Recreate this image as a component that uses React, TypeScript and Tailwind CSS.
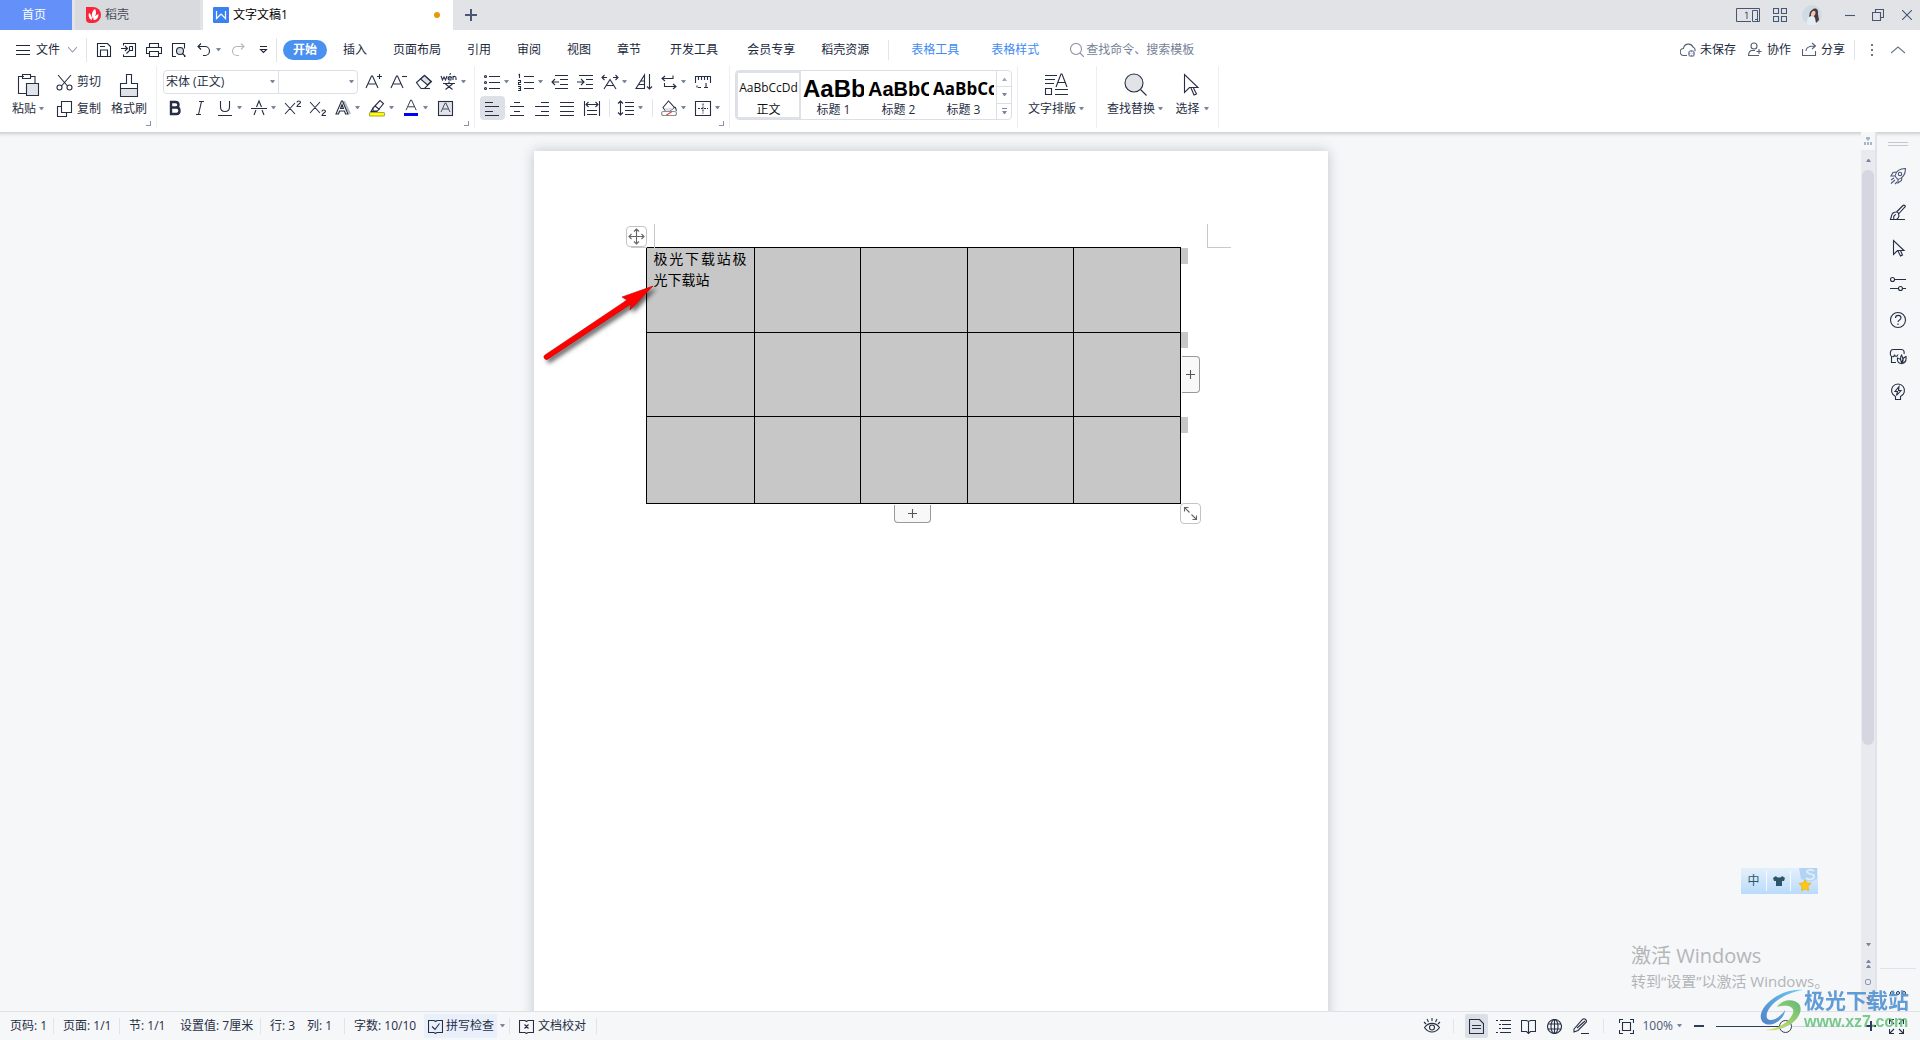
import type { ReactNode } from 'react'
import clsx from 'clsx'

const uiFont = 'font-["Open_Sans","Noto_Sans_CJK_SC",sans-serif]'

/* ---------- small building blocks ---------- */

interface IconProps {
  children: ReactNode
  size?: number
  className?: string
}

function Icon({ children, size = 18, className }: IconProps) {
  return (
    <svg
      width={size}
      height={size}
      viewBox={`0 0 ${size} ${size}`}
      fill="none"
      stroke="currentColor"
      strokeWidth={1.1}
      className={clsx('shrink-0', className)}
      aria-hidden="true"
    >
      {children}
    </svg>
  )
}

function Caret({ className }: { className?: string }) {
  return (
    <svg width="5" height="4" viewBox="0 0 5 4" className={clsx('shrink-0 text-[#7b86a0]', className)} aria-hidden="true">
      <path d="M0 0h5L3 3H2z" fill="currentColor" />
    </svg>
  )
}

interface ToolProps {
  label: string
  caret?: boolean
  active?: boolean
  children: ReactNode
}

function Tool({ label, caret, active, children }: ToolProps) {
  return (
    <button
      aria-label={label}
      className={clsx(
        'flex h-6 shrink-0 items-center',
        caret ? 'w-[34px]' : 'w-[25px]',
        active && 'rounded-sm bg-[#dde1e7]'
      )}
    >
      <span className="flex w-6 shrink-0 justify-center">{children}</span>
      {caret && <Caret />}
    </button>
  )
}

function Divider({ className }: { className?: string }) {
  return <span className={clsx('w-px shrink-0 bg-[#e1e4ea]', className)} />
}

function Launcher() {
  return (
    <button aria-label="更多设置" className="absolute right-[5px] bottom-0.5 size-[5px] border-r border-b border-[#8b94a8]" />
  )
}

/* ---------- title bar ---------- */

function TitleBar() {
  return (
    <header className="flex h-[30px] shrink-0 bg-[#e2e3e7] text-xs">
      <nav className="flex gap-[3px]">
        <button className="w-[72px] bg-[#6490fa] pr-1 text-white">首页</button>
        <button className="flex w-[125px] items-center gap-1 bg-[#d9dadd] pl-[11px] text-[#454c5c]">
          <svg width="15" height="16" viewBox="0 0 15 16" aria-hidden="true">
            <path d="M0 0h7a8 8 0 0 1 0 16H4a4 4 0 0 1-4-4z" fill="#f9253a" />
            <path d="M9 2c2 3 1 7-2 10-2-4-1-8 2-10zM3 6c2 1 3 3 3 7-3-1-4-4-3-7zM12.500 7c0 4-2 6-5 6 0-3 2-5 5-6z" fill="#fff" />
          </svg>
          稻壳
        </button>
        <button className="flex w-[250px] items-center gap-1 bg-white pl-2.5 pr-[13px] text-black">
          <svg width="16" height="16" viewBox="0 0 16 16" aria-hidden="true">
            <rect width="16" height="16" rx="1" fill="#3b82f0" />
            <path d="M3.500 4v7.500L8 7l4.500 4.500V4" fill="none" stroke="#fff" strokeWidth="1.200" />
          </svg>
          文字文稿1
          <span className="ml-auto size-1.5 rounded-full bg-[#e79a05]" />
        </button>
      </nav>
      <button aria-label="新建" className="flex w-9 items-center justify-center text-[#4a5876]">
        <Icon size={12}>
          <path d="M6 0v12M0 6h12" strokeWidth="2" />
        </Icon>
      </button>
      <div className="ml-auto flex items-center pr-2 text-[#465574]">
        <button aria-label="切换界面">
          <svg width="24" height="14" viewBox="0 0 24 14" fill="none" stroke="currentColor" aria-hidden="true">
            <path d="M15 13.500H.5V.5h23v13h-7v-11h5v11" />
            <path d="M9 5l2-1v7M19 11.500h2" />
          </svg>
        </button>
        <button aria-label="应用中心" className="ml-[13px]">
          <Icon size={14}>
            <path d="M.5.5h5v5h-5zM8.500.5h5v5h-5zM.5 8.500h5v5h-5zM8.500 8.500h5v5h-5z" />
          </Icon>
        </button>
        <button aria-label="账户" className="ml-[15px]">
          <svg width="20" height="20" viewBox="0 0 20 20" aria-hidden="true">
            <circle cx="10" cy="10" r="10" fill="#cfdbe2" />
            <path d="M5 20c-1-5 1-8 4-9l5 1 2 6a10 10 0 0 1-11 2z" fill="#e2eef3" />
            <path d="M10 5c3-3 7-1 6 4l1 6-3 3-1-5-2-3-4 2c1-3 0-5 3-7z" fill="#4a3a40" />
            <ellipse cx="11.500" cy="8.500" rx="2" ry="3" fill="#f0c6b6" transform="rotate(25 11 8)" />
          </svg>
        </button>
        <Divider className="ml-2.5 h-5 bg-[#c6c9d1]" />
        <button aria-label="最小化" className="ml-3">
          <Icon size={10}>
            <path d="M0 5.500h10" />
          </Icon>
        </button>
        <button aria-label="还原" className="ml-[17px]">
          <Icon size={12}>
            <path d="M.5 3.500h8v8h-8zM3.500 3.500v-3h8v8h-3" />
          </Icon>
        </button>
        <button aria-label="关闭" className="ml-[18px]">
          <Icon size={10}>
            <path d="M0 0l10 10M10 0L0 10" />
          </Icon>
        </button>
      </div>
    </header>
  )
}

/* ---------- menu row ---------- */

const shortTabs = ['引用', '审阅', '视图', '章节']

function MenuRow() {
  return (
    <div className="flex h-9 shrink-0 items-center pt-[3px] text-xs text-[#20283c]">
      <button className="flex items-center pl-4">
        <Icon size={14} className="mr-1.5">
          <path d="M0 2.500h14M0 7.500h14M0 11.500h14" />
        </Icon>
        文件
        <Icon size={9} className="ml-2 text-[#8e96a8]">
          <path d="M0 2l4.500 5L9 2" />
        </Icon>
      </button>
      <Divider className="ml-[9px] h-6" />
      <div className="flex items-center pl-[5px]">
        <Tool label="保存">
          <Icon size={16}>
            <path d="M1.500 3.500v-2h10l3 3v10h-13v-11zM4.500 14v-6h7v6M4 4.500h5" />
          </Icon>
        </Tool>
        <Tool label="输出为PDF">
          <Icon size={16}>
            <path d="M2.500 3.500v-2h12v13h-12v-2M0 6.500h6M4 4l2.500 2.500L4 9M8.500 4.500h3v4h-3l-3 3M8.500 4.500v4" />
          </Icon>
        </Tool>
        <Tool label="打印">
          <Icon size={16}>
            <path d="M3.500 5.500v-4h9v4M3 11.500H.5v-6h15v6H13M3.500 9.500h9v5h-9z" />
          </Icon>
        </Tool>
        <Tool label="打印预览">
          <Icon size={16}>
            <path d="M5 14.500H1.500v-13h12v5M13 14.500h1" />
            <circle cx="9" cy="9" r="3.500" fill="#d5d9e0" />
            <path d="M11.500 11.500l3 3" />
          </Icon>
        </Tool>
        <Tool label="撤销" caret>
          <Icon size={16}>
            <path d="M5 1.500L2 4.500l3 3M2 4.500h7a4.500 4.500 0 0 1 0 9H7" />
          </Icon>
        </Tool>
        <Tool label="恢复">
          <Icon size={16} className="text-[#b4b8c2]">
            <path d="M11 1.500l3 3-3 3M14 4.500H7a4.500 4.500 0 0 0 0 9h2" />
          </Icon>
        </Tool>
        <Tool label="自定义快速访问">
          <Icon size={9}>
            <path d="M1 1.500h7M1.500 4.500h6L4.500 7.500z" />
          </Icon>
        </Tool>
      </div>
      <Divider className="h-6" />
      <button className="ml-1.5 h-5 w-11 shrink-0 rounded-full bg-[#4a90f0] font-bold text-white">开始</button>
      <nav className="ml-[3px] flex shrink-0 items-center">
        <button className="px-[13px]">插入</button>
        <button className="px-[13px]">页面布局</button>
        {shortTabs.map((tab) => (
          <button key={tab} className="px-[13px]">
            {tab}
          </button>
        ))}
        <button className="ml-[3px] px-[13px]">开发工具</button>
        <button className="ml-[3px] px-[13px]">会员专享</button>
        <button className="px-[13px]">稻壳资源</button>
        <Divider className="ml-1.5 h-5" />
        <button className="ml-1.5 px-4 text-[#418af5]">表格工具</button>
        <button className="px-4 text-[#418af5]">表格样式</button>
      </nav>
      <label className="ml-[15px] flex items-center gap-0.5 text-[#8a92a6]">
        <Icon size={14}>
          <circle cx="6" cy="6" r="5.500" />
          <path d="M10 10l4 4" />
        </Icon>
        <input
          aria-label="查找命令、搜索模板"
          placeholder="查找命令、搜索模板"
          className="w-40 outline-none placeholder:text-[#757f96]"
        />
      </label>
      <div className="ml-auto flex shrink-0 items-center pr-[15px]">
        <button className="flex items-center gap-1">
          <Icon size={16} className="text-[#555e73]">
            <path d="M7 13.500H4a3.500 3.500 0 0 1-.5-7A5 5 0 0 1 13 5a3.500 3.500 0 0 1 2 4" />
            <circle cx="11.500" cy="11.500" r="3.500" fill="#8893ad" stroke="none" />
            <path d="M10 10l3 3M13 10l-3 3" stroke="#fff" />
          </Icon>
          未保存
        </button>
        <button className="ml-3 flex items-center gap-1">
          <Icon size={15} className="text-[#555e73]">
            <circle cx="6" cy="4" r="3" />
            <path d="M3 8.500c-2 1-2.500 2-2.500 5H11M3 8.500h4M8.500 9.500h5M11 7v5" />
          </Icon>
          协作
        </button>
        <button className="ml-[11px] flex items-center gap-1">
          <Icon size={15} className="text-[#555e73]">
            <path d="M.5 7v6.500h13V9M4 9c0-3 2-5 9-5M10 1l3.500 3L10 7" />
          </Icon>
          分享
        </button>
        <Divider className="ml-[9px] h-5" />
        <button aria-label="更多" className="ml-4 flex flex-col gap-[3px]">
          <span className="size-0.5 bg-[#6c7489]" />
          <span className="size-0.5 bg-[#6c7489]" />
          <span className="size-0.5 bg-[#6c7489]" />
        </button>
        <button aria-label="收起功能区" className="ml-[18px] text-[#6c7489]">
          <Icon size={14}>
            <path d="M0 10l7-6 7 6" />
          </Icon>
        </button>
      </div>
    </div>
  )
}

/* ---------- ribbon ---------- */

function LetterA({ x = 3, y = 2, s = 1 }: { x?: number; y?: number; s?: number }) {
  return <path d="M0 12L5.500 0h1L12 12M2.500 8h7" transform={`translate(${x} ${y}) scale(${s})`} />
}

function ClipboardGroup() {
  return (
    <div className="relative flex h-full w-[157px] shrink-0 border-r border-[#eceef2]">
      <button className="flex w-[52px] flex-col items-center pt-[7px] pl-1">
        <Icon size={24}>
          <path d="M8 3.500H2.500v17H10M14 3.500h5V10M6.500 1.500h8v4h-8z" />
          <path d="M10.500 10.500h12v12h-12z" fill="#e1e4e8" />
        </Icon>
        <span className="flex items-center gap-[3px] pt-1">
          粘贴 <Caret />
        </span>
      </button>
      <div className="flex w-[52px] flex-col gap-[3px] pt-1">
        <button className="flex h-6 items-center gap-1 pl-1">
          <Icon size={17}>
            <path d="M2 1l9.500 11M15 1L5.500 12" />
            <circle cx="3.500" cy="13.500" r="2.500" />
            <circle cx="13.500" cy="13.500" r="2.500" />
          </Icon>
          <span className="shrink-0">剪切</span>
        </button>
        <button className="flex h-6 items-center gap-1 pl-1">
          <Icon size={17}>
            <path d="M5.500.5h10v11h-10zM5 5.500H1.500v10h9V12" />
          </Icon>
          <span className="shrink-0">复制</span>
        </button>
      </div>
      <button className="flex w-[50px] flex-col items-center pt-[7px]">
        <Icon size={24}>
          <path d="M3.500 15.500h17v8h-17z" fill="#dfe3e8" />
          <path d="M3.500 15.500v-5h6v-9h5v9h6v5" />
        </Icon>
        <span className="pt-1">格式刷</span>
      </button>
      <Launcher />
    </div>
  )
}

function FontGroup() {
  return (
    <div className="relative flex h-full w-[318px] shrink-0 flex-col gap-0.5 border-r border-[#eceef2] pt-1 pl-1.5">
      <div className="flex items-center">
        <div className="mr-1 flex h-6 rounded-sm border border-[#dcdfe6]">
          <span className="relative flex w-[115px] items-center border-r border-[#dcdfe6]">
            <select aria-label="字体" className="w-full appearance-none pl-0.5 outline-none">
              <option>宋体 (正文)</option>
            </select>
            <Caret className="pointer-events-none absolute right-[3px]" />
          </span>
          <span className="relative flex w-[78px] items-center">
            <select aria-label="字号" className="w-full appearance-none outline-none">
              <option></option>
            </select>
            <Caret className="pointer-events-none absolute right-[3px]" />
          </span>
        </div>
        <Tool label="增大字号">
          <Icon>
            <LetterA x={1} y={3} />
            <path d="M12 3.500h5M14.500 1v5" />
          </Icon>
        </Tool>
        <Tool label="减小字号">
          <Icon>
            <LetterA x={1} y={3} />
            <path d="M12 3.500h5" />
          </Icon>
        </Tool>
        <Tool label="清除格式">
          <Icon>
            <path d="M1.500 9.500l8-7 7 6-7 7H6z" />
            <path d="M5.500 6l4-3.500 6.500 6-3.500 3.500z" fill="#dcdfe4" />
            <path d="M6 15.500h9" />
          </Icon>
        </Tool>
        <Tool label="拼音指南" caret>
          <Icon>
            <path d="M1 3l1.500 4L4 4l1.500 3L7 3M8 5h3.500c0-2-3-2-3.500 0 0 2 2 2.500 3.500 1.500M13 7V3M13 4.500c1-2 3-1 3 .5v2M9.500 1.500l1.500-1" />
            <path d="M3 10.500h12M9 8.500v2M5.500 11l7 5.500M12.500 11l-7 5.500" />
          </Icon>
        </Tool>
      </div>
      <div className="flex items-center">
        <Tool label="加粗">
          <Icon>
            <path d="M5 3h4.500c4 0 4 5.500 0 5.500H5zM5 8.500h5.500c4 0 4 6.500 0 6.500H5z" strokeWidth="2.400" />
          </Icon>
        </Tool>
        <Tool label="倾斜">
          <Icon>
            <path d="M8 2.500h5M5 15.500h5M10.500 2.500l-3 13" />
          </Icon>
        </Tool>
        <Tool label="下划线" caret>
          <Icon>
            <path d="M4.500 2v6c0 6 9 6 9 0V2M2 16.500h14" />
          </Icon>
        </Tool>
        <Tool label="删除线" caret>
          <Icon>
            <path d="M4 16l2-5M14 16l-2-5M6.500 8L9 2l2.500 6M1 9.500h16" />
          </Icon>
        </Tool>
        <Tool label="上标">
          <Icon>
            <path d="M1 4l10 11M11 4L1 15M13 3.500c0-2 3.500-2 3.500 0 0 1-3.500 2-3.500 4h4" />
          </Icon>
        </Tool>
        <Tool label="下标">
          <Icon>
            <path d="M1 3l10 11M11 3L1 14M13 12.500c0-2 3.500-2 3.500 0 0 1-3.500 2-3.500 4h4" />
          </Icon>
        </Tool>
        <Tool label="文字效果" caret>
          <Icon>
            <g stroke="#b2b8c3" strokeWidth="2">
              <LetterA x={4} y={3} />
            </g>
            <path d="M2 15L7.500 2h1L14 15h-2.500l-1-3h-5l-1 3zM6.500 9.500h3L8 5.500z" fill="#fff" />
          </Icon>
        </Tool>
        <Tool label="突出显示" caret>
          <Icon>
            <path d="M5 9l7-7.500 3.500 3L9.500 12H5z" />
            <path d="M5 9l-2 3.500h5l1.500-.500M7 7l4.500 3.500" />
            <rect x="1.500" y="13.500" width="15" height="3.500" rx="1" fill="#ff0" stroke="#a9a93a" />
          </Icon>
        </Tool>
        <Tool label="字体颜色" caret>
          <Icon>
            <LetterA x={4} y={1} s={0.85} />
            <rect x="2" y="14" width="14" height="3" fill="#00f" stroke="none" />
          </Icon>
        </Tool>
        <Tool label="字符底纹">
          <Icon>
            <rect x="2.500" y="2.500" width="14" height="14" fill="#e1e4e8" />
            <LetterA x={5} y={4} s={0.75} />
          </Icon>
        </Tool>
      </div>
      <Launcher />
    </div>
  )
}

function ParagraphGroup() {
  return (
    <div className="relative flex h-full w-[255px] shrink-0 flex-col gap-0.5 border-r border-[#eceef2] pt-1 pl-[5px]">
      <div className="flex items-center">
        <Tool label="项目符号" caret>
          <Icon>
            <path d="M6 3.500h11M6 9.500h11M6 15.500h11" />
            <circle cx="2.500" cy="3.500" r="1" />
            <circle cx="2.500" cy="9.500" r="1" />
            <circle cx="2.500" cy="15.500" r="1" />
          </Icon>
        </Tool>
        <Tool label="编号" caret>
          <Icon>
            <path d="M7 3.500h10M7 9.500h10M7 15.500h10M1.500 2l1-.5V5M1 7.500h2.500v2H1.500v2H4M1 13.500h2.500v4H1M1.500 15.500h2" />
          </Icon>
        </Tool>
        <Tool label="减少缩进">
          <Icon>
            <path d="M4 2.500h13M9 6.500h8M9 11.500h8M4 15.500h13M1 9h7M4 6L1 9l3 3" />
          </Icon>
        </Tool>
        <Tool label="增加缩进">
          <Icon>
            <path d="M3 2.500h14M10 6.500h7M10 11.500h7M3 15.500h14M1 9h7M5 6l3 3-3 3" />
          </Icon>
        </Tool>
        <Tool label="中文版式" caret>
          <Icon>
            <path d="M1 4.500h5M12 4.500h5M3.500 2L1 4.500 3.500 7M14.500 2L17 4.500 14.500 7M3 16l6-9.500L15 16M5.500 12.500h7" />
          </Icon>
        </Tool>
        <Tool label="排序">
          <Icon>
            <path d="M1 15.500L9.500 2v13.500zM4 11.500h5.500M6 8h3.500M14.500 1v15M12 13.500l2.500 2.500 2.500-2.500" />
          </Icon>
        </Tool>
        <Tool label="显示段落标记" caret>
          <Icon>
            <path d="M2 5.500h11v-3M5 3L2 5.500 5 8M4.500 10v3.500H16M13 11l3 2.500-3 2.500" />
          </Icon>
        </Tool>
        <Tool label="制表位">
          <Icon>
            <path d="M1.500 10V3.500h15V10M4.500 4v3M7.500 4v3M10.500 4v3M13.500 4v3M4 14.500h3M10 14.500h4M12 10v4.500M3 12.500v2" />
          </Icon>
        </Tool>
      </div>
      <div className="flex items-center">
        <Tool label="左对齐" active>
          <Icon>
            <path d="M2 3.500h8M2 7.500h14M2 12.500h8M2 16.500h14" />
          </Icon>
        </Tool>
        <Tool label="居中对齐">
          <Icon>
            <path d="M6 3.500h6M2 7.500h14M6 12.500h6M2 16.500h14" />
          </Icon>
        </Tool>
        <Tool label="右对齐">
          <Icon>
            <path d="M8 3.500h8M2 7.500h14M8 12.500h8M2 16.500h14" />
          </Icon>
        </Tool>
        <Tool label="两端对齐">
          <Icon>
            <path d="M2 3.500h14M2 7.500h14M2 12.500h14M2 16.500h14" />
          </Icon>
        </Tool>
        <Tool label="分散对齐">
          <Icon>
            <path d="M1.500 2v15M16.500 2v15M3 5.500h12M5.500 3L3 5.500 5.500 8M12.500 3L15 5.500 12.500 8M4 11.500h10M4 15.500h10" />
          </Icon>
        </Tool>
        <Divider className="mx-1 h-[18px]" />
        <Tool label="行距" caret>
          <Icon>
            <path d="M8 3.500h9M8 7.500h9M8 11.500h9M8 15.500h9M3.500 2v14M1 4.500L3.500 2 6 4.500M1 13.500L3.500 16 6 13.500" />
          </Icon>
        </Tool>
        <Divider className="mx-1 h-[18px]" />
        <Tool label="底纹颜色" caret>
          <Icon>
            <path d="M3 8.500L8.500 2l6 6.500-5.500 4H6z" fill="#fff" />
            <path d="M4 9h10l-5 3.500H6z" fill="#dcdfe4" stroke="none" />
            <rect x="1.500" y="12.500" width="15" height="4" rx="2" stroke="#8d8f98" fill="#fff" />
            <path d="M6 16.500l6-4" stroke="#e04848" />
            <path d="M15 8c1 2 2 3 1 4" />
          </Icon>
        </Tool>
        <Tool label="边框" caret>
          <Icon>
            <path d="M1.500 2.500h15v14h-15z" />
            <path d="M9 4.500v10M4 9.500h10" strokeDasharray="2 1" />
          </Icon>
        </Tool>
      </div>
      <Launcher />
    </div>
  )
}

const headingStyles = [
  { name: '标题 1', sample: 'AaBb', preview: 'text-2xl font-["Liberation_Sans",sans-serif]' },
  { name: '标题 2', sample: 'AaBbC', preview: 'text-xl font-["Liberation_Sans",sans-serif]' },
  { name: '标题 3', sample: 'AaBbCc', preview: 'text-[17px] font-["Open_Sans",sans-serif]' },
]

function StyleGallery() {
  return (
    <div className="h-full w-[288px] shrink-0 border-r border-[#eceef2] pt-1 pl-[5px]">
      <div className="flex h-[50px] w-[277px] rounded-sm border border-[#dcdfe6]">
        <button className="flex w-[65px] shrink-0 flex-col items-center border-2 border-[#dfe1e8] text-[#111]">
          <span className="h-[29px] leading-[30px]">AaBbCcDd</span>
          <span className="leading-4">正文</span>
        </button>
        {headingStyles.map((style) => (
          <button key={style.name} className="flex w-[65px] shrink-0 flex-col items-center pt-0.5">
            <span className={clsx('h-[29px] w-[61px] overflow-hidden text-left leading-8 font-bold text-black', style.preview)}>
              {style.sample}
            </span>
            <span className="leading-4">{style.name}</span>
          </button>
        ))}
        <div className="flex flex-1 flex-col divide-y divide-[#dcdfe6] border-l border-[#dcdfe6]">
          <button aria-label="上一行" className="flex flex-1 items-center justify-center">
            <Caret className="rotate-180 opacity-70" />
          </button>
          <button aria-label="下一行" className="flex flex-1 items-center justify-center">
            <Caret />
          </button>
          <button aria-label="展开样式" className="flex flex-1 flex-col items-center justify-center gap-0.5">
            <span className="h-px w-[5px] bg-[#7b86a0]" />
            <Caret />
          </button>
        </div>
      </div>
    </div>
  )
}

function Ribbon() {
  return (
    <div className="flex h-[66px] shrink-0 pb-1 text-xs text-[#262e44]">
      <ClipboardGroup />
      <FontGroup />
      <ParagraphGroup />
      <StyleGallery />
      <button className="flex h-full w-[79px] shrink-0 flex-col items-center border-r border-[#eceef2] pt-[7px] pr-0.5">
        <Icon size={24}>
          <path d="M1 2.500h12M1 6.500h10M1 10.500h9M1.500 15.500h6v6h-6zM11 16.500h13M11 21.500h13" />
          <path d="M12 14l5-13h1l5 13M14 9.500h7" />
        </Icon>
        <span className="flex items-center gap-[3px] pt-1">
          文字排版 <Caret />
        </span>
      </button>
      <div className="flex h-full w-[122px] shrink-0 border-r border-[#eceef2]">
        <button className="flex w-[76px] flex-col items-center pt-[7px]">
          <Icon size={24}>
            <circle cx="11" cy="10" r="9" fill="#e1e3e7" />
            <path d="M17.500 16.500l6 6" />
          </Icon>
          <span className="flex items-center gap-[3px] pt-1">
            查找替换 <Caret />
          </span>
        </button>
        <button className="flex w-[38px] flex-col items-center pt-[7px]">
          <Icon size={24}>
            <path d="M4.500 1.500v18l5-5h8.500zM11 15l3 7 2.500-1-3-6" />
          </Icon>
          <span className="flex items-center gap-1 pt-1">
            选择 <Caret />
          </span>
        </button>
      </div>
    </div>
  )
}

/* ---------- document ---------- */

const rowHeights = ['h-[85px]', 'h-[84px]', 'h-[87px]']

function DocumentTable() {
  return (
    <table className="w-[535px] table-fixed border-collapse bg-[#c7c7c7] text-sm leading-[21px] text-black">
      <colgroup>
        <col className="w-[108px]" />
        <col span={4} />
      </colgroup>
      <tbody>
        {rowHeights.map((height, row) => (
          <tr key={height} className={height}>
            {[0, 1, 2, 3, 4].map((col) => (
              <td
                key={col}
                className='border border-black px-[7px] text-justify align-top font-["Noto_Sans_CJK_SC",sans-serif]'
              >
                {row === 0 && col === 0 && '极光下载站极光下载站'}
              </td>
            ))}
          </tr>
        ))}
      </tbody>
    </table>
  )
}

function Page() {
  return (
    <article className="relative h-[1123px] w-[794px] shrink-0 bg-white px-28 pt-24 shadow-[0_0_12px_rgba(60,65,75,0.28)]">
      {/* margin corner marks */}
      <span className="absolute top-[73px] left-[120px] h-6 w-px bg-[#c9c9c9]" />
      <span className="absolute top-24 left-[97px] h-px w-4 bg-[#c9c9c9]" />
      <span className="absolute top-[73px] left-[673px] h-6 w-6 border-b border-l border-[#c9c9c9]" />

      <DocumentTable />

      {/* end-of-row selection */}
      <span className="absolute top-[97px] left-[647px] h-4 w-[7px] bg-[#c7c7c7]" />
      <span className="absolute top-[181px] left-[647px] h-4 w-[7px] bg-[#c7c7c7]" />
      <span className="absolute top-[266px] left-[647px] h-4 w-[7px] bg-[#c7c7c7]" />

      {/* table handles */}
      <button aria-label="移动表格" className="absolute top-[75px] left-[92px] flex size-[21px] items-center justify-center rounded-sm border border-[#c4c4c4] bg-white text-[#666]">
        <Icon size={17}>
          <path d="M8.500 1v15M1 8.500h15M6 3.500L8.500 1 11 3.500M6 13.500L8.500 16l2.500-2.500M3.500 6L1 8.500 3.500 11M13.500 6L16 8.500 13.500 11" />
        </Icon>
      </button>
      <button aria-label="添加列" className="absolute top-[205px] left-[648px] flex h-[37px] w-[18px] items-center justify-center rounded-r border border-l-0 border-[#999] bg-[#f8f8f8] text-[#555]">
        <Icon size={9}>
          <path d="M4.500 0v9M0 4.500h9" />
        </Icon>
      </button>
      <button aria-label="添加行" className="absolute top-[354px] left-[360px] flex h-[18px] w-[37px] items-center justify-center rounded-b border border-t-0 border-[#999] bg-[#f8f8f8] text-[#555]">
        <Icon size={9}>
          <path d="M4.500 0v9M0 4.500h9" />
        </Icon>
      </button>
      <button aria-label="缩放表格" className="absolute top-[352px] left-[646px] flex size-[21px] items-center justify-center rounded-sm border border-[#c4c4c4] bg-white text-[#666]">
        <Icon size={15}>
          <path d="M1.500 5.500v-4h4M1.500 1.500l5 5M13.500 9.500v4h-4M13.500 13.500l-5-5" />
        </Icon>
      </button>

      {/* red pointer */}
      <svg width="130" height="100" viewBox="0 0 130 100" className="pointer-events-none absolute top-[125px] left-0 drop-shadow-[3px_3px_2px_rgba(0,0,0,0.6)]" aria-hidden="true">
        <path d="M119 10L88 21l5 3L11 79a2 2 0 0 0 3 4L97 28l-1 6z" fill="#fe0000" stroke="#c40000" strokeWidth="0.600" />
      </svg>
    </article>
  )
}

function ScrollTrack() {
  return (
    <div className="flex w-4 shrink-0 flex-col items-center border-r-2 border-[#e1e3ea] bg-[#e9eaf0] text-[#8b98b5]">
      <div className="flex h-[18px] w-full items-center justify-center bg-[#f5f7f9]">
        <Icon size={8} className="opacity-70">
          <path d="M2 0h4v2L4 4 2 2z" fill="currentColor" stroke="none" />
          <path d="M0 5h2v3H0zM3 5h2v3H3zM6 5h2v3H6z" fill="currentColor" stroke="none" />
        </Icon>
      </div>
      <button aria-label="向上滚动" className="flex h-5 items-center">
        <Caret className="rotate-180" />
      </button>
      <div className="w-3 flex-[575] rounded-full bg-[#d4d7e0]" />
      <div className="flex-[192]" />
      <button aria-label="向下滚动" className="flex h-4 items-center">
        <Caret />
      </button>
      <button aria-label="上一页" className="flex h-5 flex-col items-center justify-center gap-px">
        <Caret className="rotate-180" />
        <Caret className="rotate-180" />
      </button>
      <button aria-label="选择浏览对象" className="flex h-[18px] items-center">
        <span className="size-1.5 rounded-xs border border-[#8b98b5]" />
      </button>
      <button aria-label="下一页" className="flex h-5 flex-col items-center justify-center gap-px">
        <Caret />
        <Caret />
      </button>
    </div>
  )
}

function SideBar() {
  return (
    <aside className="flex w-[43px] shrink-0 flex-col items-center pr-0.5 text-[#262e44]">
      <div className="mt-2.5 h-1 w-5 shrink-0 border-y border-[#c4c7ce]" />
      <div className="mt-[21px] flex flex-col gap-[18px]">
        <button aria-label="快捷" className="text-[#4c5a78]">
          <Icon>
            <path d="M6 9c1-5 4-7.500 10.500-7.500C16.500 8 14 11 9 12.500zM6 9L2 9l2-3.500 3.500-.500M9 12.500V16l3.500-2.500.5-3.500M5 11l-3 2M6 13l-4 3.500M8 15l-2 2" />
            <circle cx="11" cy="7" r="1.700" />
          </Icon>
        </button>
        <button aria-label="样式">
          <Icon>
            <path d="M7.500 9L14 2.500c1-1 3 .5 2 1.500l-6.500 7M7.500 9c1 0 2 1 2 2 1 2 0 4-2 5.500M7.500 9c-3 0-4.500 1-5 4L1.500 16.500H16M5 16c-1-2 0-4 2-4.500" />
          </Icon>
        </button>
        <button aria-label="选择窗格">
          <Icon>
            <path d="M4.500 1.500v14l4-4H15zM9 12l2.500 5 2-1-2-4.500" />
          </Icon>
        </button>
        <button aria-label="属性">
          <Icon>
            <path d="M6 4.500h11M1 13.500h8M14 13.500h3" />
            <circle cx="3.500" cy="4.500" r="2" />
            <circle cx="11.500" cy="13.500" r="2" />
          </Icon>
        </button>
        <button aria-label="帮助">
          <Icon>
            <circle cx="9" cy="9" r="7.500" />
            <path d="M6.500 7c0-3.500 5.500-3.500 5.500 0 0 2-3 2-3 4M9 12.500v1.500" />
          </Icon>
        </button>
        <button aria-label="稻壳素材">
          <Icon>
            <path d="M7 15.500H2.500V9.500M2.500 9.500C.5 8 1 2.500 4 2.500h8.500c2.500 0 3 2.500 2.500 4.500M2.500 9.500c1.500.5 3 0 3-2 0 2.500 3 2.500 3.500 0" />
            <path d="M12.500 8c-1.500 3-1 6 .5 8.500 1.500-2.500 1.500-5.500-.5-8.500zM8.500 11c-.5 3.500 1 5.500 4.500 5.500-.5-3-2-5-4.500-5.500zM17 9.500c.5 4-1 6.500-4 7 0-3.500 1.500-6 4-7z" />
          </Icon>
        </button>
        <button aria-label="灵感">
          <Icon>
            <path d="M6.500 13.500a6.500 6.500 0 1 1 5 0v3h-5z" />
            <path d="M10 3.500L6 8.500h2.500l-1 4 4.500-5H9.500z" />
          </Icon>
        </button>
      </div>
      <div className="mt-auto h-px w-9 shrink-0 bg-[#e1e3ea]" />
      <button aria-label="更多面板" className="mt-[22px] mb-4 flex gap-0.5">
        <span className="size-1 rounded-full border border-[#262e44]" />
        <span className="size-1 rounded-full border border-[#262e44]" />
        <span className="size-1 rounded-full border border-[#262e44]" />
      </button>
    </aside>
  )
}

/* ---------- status bar ---------- */

function StatusBar() {
  return (
    <footer className="flex h-[29px] shrink-0 items-center border-t border-[#dfe1e6] bg-[#f5f7f9] text-xs whitespace-nowrap text-[#262e44]">
      <span className="w-[53px] pl-2.5">页码: 1</span>
      <span className="w-[66px] border-l border-[#e1e4ea] pl-[9px]">页面: 1/1</span>
      <span className="w-[51px] border-l border-[#e1e4ea] pl-[9px]">节: 1/1</span>
      <span className="w-[90px] pl-2.5">设置值: 7厘米</span>
      <span className="w-[37px] border-l border-[#e1e4ea] pl-[9px]">行: 3</span>
      <span className="w-[47px] pl-2.5">列: 1</span>
      <span className="w-20 border-l border-[#e1e4ea] pl-[9px]">字数: 10/10</span>
      <button className="flex h-6 items-center gap-[3px] bg-[#e9f0fc] pr-[3px] pl-1">
        <Icon size={15}>
          <path d="M6 1.500H.5v12H6l1.500 1 1.500-1h5.500v-12H9l-1.500 1zM4 7.500l3 3 4.500-6" />
        </Icon>
        拼写检查
      </button>
      <button aria-label="拼写检查选项" className="flex h-6 w-2.5 items-center justify-center">
        <Caret />
      </button>
      <Divider className="ml-0.5 h-4" />
      <button className="ml-[9px] flex items-center gap-1">
        <Icon size={15}>
          <path d="M6 1.500H.5v12H6l1.500 1 1.500-1h5.500v-12H9l-1.500 1zM5.500 5.500l4 4M9.500 5.500l-4 4" />
        </Icon>
        文档校对
      </button>
      <Divider className="ml-2.5 h-4" />

      <div className="ml-auto flex items-center pr-4">
        <button aria-label="护眼模式">
          <Icon>
            <path d="M1.500 10.500c4-5.500 11-5.500 15 0-4 6-11 6-15 0zM9 1v3M4 2l1.500 3M14 2l-1.500 3M1 5l2 2M17 5l-2 2" />
            <circle cx="9" cy="10.500" r="2.500" />
          </Icon>
        </button>
        <Divider className="ml-3 h-3.5" />
        <button aria-label="页面视图" className="ml-[11px] flex h-6 w-[23px] items-center justify-center rounded-xs bg-[#dae0e6]">
          <Icon size={15}>
            <path d="M.5.5h10l4 4v10H.5zM3 6.500h9M3 9.500h9" />
          </Icon>
        </button>
        <button aria-label="大纲" className="ml-2">
          <Icon size={15}>
            <path d="M4 1.500h11M6 5.500h9M6 9.500h9M4 13.500h11M0 1.500h2M3 5.500h2M3 9.500h2M0 13.500h2" />
          </Icon>
        </button>
        <button aria-label="阅读版式" className="ml-2.5">
          <Icon size={15}>
            <path d="M.5 1.500h5l2 1 2-1h5v11h-5l-2 2-2-2h-5zM7.500 3v11" />
          </Icon>
        </button>
        <button aria-label="Web版式" className="ml-[11px]">
          <Icon size={15}>
            <circle cx="7.500" cy="7.500" r="7" />
            <ellipse cx="7.500" cy="7.500" rx="3.500" ry="7" />
            <path d="M1 5h13M1 10h13M7.500.5v14" />
          </Icon>
        </button>
        <button aria-label="写作模式" className="ml-[11px]">
          <Icon size={16}>
            <path d="M1 11L9.500 1.500c2-2 5 1 3.500 3L5 12.500l-4 1.500zM4 10l8-7M8 15.500h8" />
          </Icon>
        </button>
        <Divider className="ml-3.5 h-3.5" />
        <button aria-label="最佳显示比例" className="ml-[15px]">
          <Icon size={15}>
            <path d="M.5 4V.5H4M11 .5h3.500V4M14.500 11v3.500H11M4 14.500H.5V11M3.500 3.500h8v8h-8z" />
          </Icon>
        </button>
        <button className="ml-2 flex items-center gap-1 text-[#4a5876]">
          100% <Caret />
        </button>
        <button aria-label="缩小" className="ml-3 flex h-5 items-center">
          <span className="h-0.5 w-2.5 bg-[#2f3c5a]" />
        </button>
        <input
          type="range"
          aria-label="显示比例"
          defaultValue={50}
          className="ml-3 h-px w-[138px] appearance-none bg-linear-to-r from-[#2f3c5a] from-50% to-[#d0d4dc] to-50% outline-none [&::-webkit-slider-thumb]:size-[13px] [&::-webkit-slider-thumb]:appearance-none [&::-webkit-slider-thumb]:rounded-full [&::-webkit-slider-thumb]:border [&::-webkit-slider-thumb]:border-[#2f3c5a] [&::-webkit-slider-thumb]:bg-[#f5f7f9]"
        />
        <button aria-label="放大" className="ml-3 text-[#2f3c5a]">
          <Icon size={10}>
            <path d="M5 0v10M0 5h10" strokeWidth="2" />
          </Icon>
        </button>
        <button aria-label="全屏显示" className="ml-[13px]">
          <Icon size={15}>
            <path d="M.5 5V.5H5M10 .5h4.500V5M14.500 10v4.500H10M5 14.500H.5V10M.5.5L5 5M14.500.5L10 5M14.500 14.500L10 10M.5 14.500L5 10" />
          </Icon>
        </button>
      </div>
    </footer>
  )
}

/* ---------- floating overlays ---------- */

function ImeBar() {
  return (
    <div className="absolute right-[102px] bottom-[146px] flex h-[26px] w-[77px] items-center divide-x divide-white/80 bg-linear-to-b from-[#e4f0fb] to-[#b9dbfa] text-xs text-[#2f5568]">
      <button className="h-5 w-[26px]">中</button>
      <button aria-label="皮肤" className="flex h-5 w-6 items-center justify-center">
        <svg width="12" height="10" viewBox="0 0 12 10" aria-hidden="true">
          <path d="M3 0c1 2 5 2 6 0l3 2-1 3H9v5H3V5H1L0 2z" fill="currentColor" />
        </svg>
      </button>
      <button aria-label="输入法" className="flex h-full flex-1 items-center justify-end">
        <svg width="22" height="26" viewBox="0 0 22 26" aria-hidden="true">
          <path d="M3 0h18v11l-7 3-9-3z" fill="#b3d3f3" />
          <path d="M18 3c-4-3-9 0-6 2s7 1 6 4-6 3-8 1" fill="none" stroke="#dcecfa" strokeWidth="2" />
          <path d="M9 12l2 3 4 .5-3 3 .5 4-3.500-1.500-3.500 1.500.5-4-3-3 4-.5z" fill="#fdc912" stroke="#f3a50c" strokeWidth="0.700" />
        </svg>
      </button>
    </div>
  )
}

function ActivationNotice() {
  return (
    <div className="pointer-events-none absolute right-[88px] bottom-12 w-[201px] whitespace-nowrap text-[#b3b5b7]">
      <p className="text-xl leading-7">激活 Windows</p>
      <p className="text-[15px] leading-[22px]">转到“设置”以激活 Windows。</p>
    </div>
  )
}

function SiteBadge() {
  return (
    <div className="pointer-events-none absolute right-2 bottom-2 flex items-center opacity-90">
      <svg width="44" height="44" viewBox="0 0 44 44" aria-hidden="true">
        <defs>
          <linearGradient id="badgeBlue" x1="1" y1="0" x2="0" y2="1">
            <stop offset="0" stopColor="#5cc8f2" />
            <stop offset="1" stopColor="#3f74c4" />
          </linearGradient>
          <linearGradient id="badgeGreen" x1="1" y1="0" x2="0" y2="1">
            <stop offset="0" stopColor="#4fb36b" />
            <stop offset="1" stopColor="#d9e35c" />
          </linearGradient>
        </defs>
        <path d="M43 2C25 0 4 13 1 26c-2 9 7 14 16 8 5-3 8-8 8-12-5 8-15 13-18 8C4 20 22 5 43 2z" fill="url(#badgeBlue)" />
        <path d="M17 19c5-8 17-9 22-3 7 9-9 29-34 26 13-1 25-8 28-17 2-7-7-9-16-6z" fill="url(#badgeGreen)" />
      </svg>
      <div className="w-[108px] whitespace-nowrap">
        <p className="text-[21px] leading-6 font-bold text-[#5393d3]">极光下载站</p>
        <p className='font-["Liberation_Sans",sans-serif] text-base leading-5 font-bold text-[#6cc381]'>www.xz7.com</p>
      </div>
    </div>
  )
}

export default function App() {
  return (
    <div className={clsx('relative flex h-screen flex-col overflow-hidden bg-white', uiFont)}>
      <TitleBar />
      <MenuRow />
      <Ribbon />
      <main className="flex min-h-0 flex-1 bg-[#f5f7f9] shadow-[inset_0_5px_4px_-4px_rgba(0,0,0,0.25)]">
        <div className="flex min-w-0 flex-1 justify-center overflow-hidden pt-[19px]">
          <Page />
        </div>
        <ScrollTrack />
        <SideBar />
      </main>
      <StatusBar />
      <ImeBar />
      <ActivationNotice />
      <SiteBadge />
    </div>
  )
}
